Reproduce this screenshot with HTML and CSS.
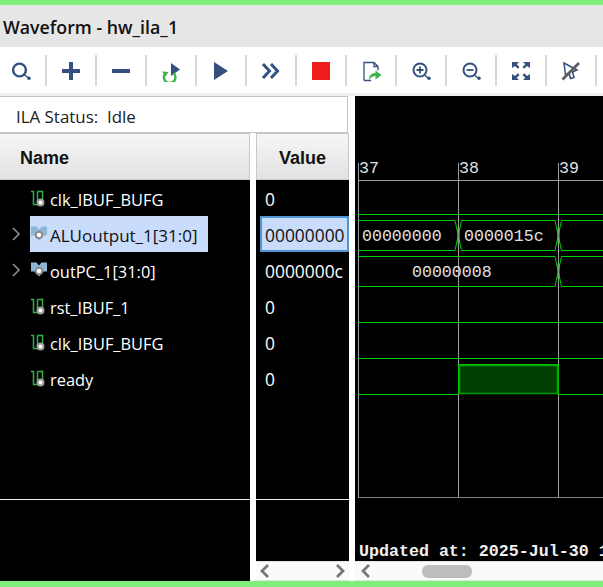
FILE: index.html
```html
<!DOCTYPE html>
<html lang="en">
<head>
<meta charset="utf-8">
<title>Waveform - hw_ila_1</title>
<link rel="stylesheet" href="styles.css">
</head>
<body>
<div class="app">
  <div class="green-bar"></div>
  <header class="title-bar">Waveform - hw_ila_1</header>
  <nav class="toolbar">
    <div class="tool"><svg viewBox="0 0 24 24"><circle cx="10.500" cy="12" r="6.400" fill="none" stroke="#34507f" stroke-width="2.400"/><path d="M15 16.500l4 3" stroke="#34507f" stroke-width="1.500"/><circle cx="20" cy="20.200" r="1.800" fill="#34507f"/></svg></div>
    <div class="tool"><svg viewBox="0 0 24 24"><path d="M3 11h18v4H3zM10 4h4v18h-4z" fill="#34507f"/></svg></div>
    <div class="tool"><svg viewBox="0 0 24 24"><path d="M3 11h18v4H3z" fill="#34507f"/></svg></div>
    <div class="tool"><svg viewBox="0 0 24 24"><path d="M12 5l9 6.500-9 6.500z" fill="#34507f"/><path d="M6.200 15.500a5.800 5.800 0 1 0 8.500-.5" fill="none" stroke="#3fb34a" stroke-width="2.400"/><path d="M3 13.500l6.500.5-3 4.500z" fill="#3fb34a"/></svg></div>
    <div class="tool"><svg viewBox="0 0 24 24"><path d="M5 4l14 9-14 9z" fill="#34507f"/></svg></div>
    <div class="tool"><svg viewBox="0 0 24 24"><path d="M4 6l6.500 7-6.500 7M12 6l6.500 7-6.500 7" fill="none" stroke="#34507f" stroke-width="3"/></svg></div>
    <div class="tool"><svg viewBox="0 0 24 24"><path d="M3 4h18v18H3z" fill="#ee1c1c"/></svg></div>
    <div class="tool"><svg viewBox="0 0 24 24"><path d="M5 22.500V4.500h10l4 4v4M15 4.500v4h4M5 22.500h7" fill="none" stroke="#34507f" stroke-width="1.300"/><path d="M10 22c0-5 3-7 6.500-7v-2.500l6 4.500-6 4.500V18c-2.500 0-4.500 1-6.500 4z" fill="#3fb34a"/></svg></div>
    <div class="tool"><svg viewBox="0 0 24 24"><circle cx="11" cy="12" r="6.500" fill="none" stroke="#34507f" stroke-width="2"/><path d="M7.500 12h7M11 8.500v7" stroke="#34507f" stroke-width="1.800"/><path d="M15.500 17l3.500 3" stroke="#34507f" stroke-width="1.500"/><circle cx="20" cy="20.300" r="1.800" fill="#34507f"/></svg></div>
    <div class="tool"><svg viewBox="0 0 24 24"><circle cx="11" cy="12" r="6.500" fill="none" stroke="#34507f" stroke-width="2"/><path d="M7.500 12h7" stroke="#34507f" stroke-width="1.800"/><path d="M15.500 17l3.500 3" stroke="#34507f" stroke-width="1.500"/><circle cx="20" cy="20.300" r="1.800" fill="#34507f"/></svg></div>
    <div class="tool"><svg viewBox="0 0 24 24"><path d="M3 4h7l-2.300 2.300 2.800 2.800-1.700 1.700-2.800-2.800L3 10zM21 4h-7l2.300 2.300-2.800 2.800 1.700 1.700 2.800-2.800L21 10zM3 22h7l-2.300-2.300 2.800-2.800-1.700-1.700-2.800 2.800L3 16zM21 22h-7l2.300-2.300-2.800-2.800 1.700-1.700 2.800 2.800L21 16z" fill="#34507f"/></svg></div>
    <div class="tool"><svg viewBox="0 0 24 24"><path d="M5 5l13 7-4.500 2 1.500 5.500-3.500 1-1.500-5.500-3.500 2z" fill="none" stroke="#34507f" stroke-width="1.500"/><path d="M3.500 21.500L20 5" stroke="#5f5f5f" stroke-width="2.800"/></svg></div>
    <div class="tool tool-cut"></div>
  </nav>
  <div class="strip"></div>
  <main class="main">
    <section class="left-pane">
      <div class="status">ILA Status:  Idle</div>
      <div class="columns">
        <div class="col col-name">
          <div class="col-head col-head-name">Name</div>
          <div class="rows">
            <div class="row"><span class="twist"></span><span class="cell-name"><svg class="sig" viewBox="0 0 18 18"><path d="M1 2.500h2.500v13H8M7.500 2.500v11M12.500 1.500v11M7.500 2.500h5" fill="none" stroke="#34b044" stroke-width="1.500"/><circle cx="10.500" cy="13.500" r="3" fill="#fff" stroke="#9a9a9a" stroke-width="2"/></svg><span class="lbl">clk_IBUF_BUFG</span></span></div>
            <div class="row"><span class="twist"><svg viewBox="0 0 10 16"><path d="M2 2l6 6-6 6" fill="none" stroke="#8f8f8f" stroke-width="1.600"/></svg></span><span class="cell-name selected"><svg class="sig" viewBox="0 0 18 18"><path d="M1 1.500h5.500l2.500 3 2.500-3H17v9h-4l-4 5-4-5H1z" fill="#8fb6d6"/><circle cx="9" cy="10" r="3.300" fill="#fff" stroke="#8a8a8a" stroke-width="2"/></svg><span class="lbl lbl-wide">ALUoutput_1[31:0]</span></span></div>
            <div class="row"><span class="twist"><svg viewBox="0 0 10 16"><path d="M2 2l6 6-6 6" fill="none" stroke="#8f8f8f" stroke-width="1.600"/></svg></span><span class="cell-name"><svg class="sig" viewBox="0 0 18 18"><path d="M1 1.500h5.500l2.500 3 2.500-3H17v9h-4l-4 5-4-5H1z" fill="#8fb6d6"/><circle cx="9" cy="10" r="3.300" fill="#fff" stroke="#8a8a8a" stroke-width="2"/></svg><span class="lbl">outPC_1[31:0]</span></span></div>
            <div class="row"><span class="twist"></span><span class="cell-name"><svg class="sig" viewBox="0 0 18 18"><path d="M1 2.500h2.500v13H8M7.500 2.500v11M12.500 1.500v11M7.500 2.500h5" fill="none" stroke="#34b044" stroke-width="1.500"/><circle cx="10.500" cy="13.500" r="3" fill="#fff" stroke="#9a9a9a" stroke-width="2"/></svg><span class="lbl">rst_IBUF_1</span></span></div>
            <div class="row"><span class="twist"></span><span class="cell-name"><svg class="sig" viewBox="0 0 18 18"><path d="M1 2.500h2.500v13H8M7.500 2.500v11M12.500 1.500v11M7.500 2.500h5" fill="none" stroke="#34b044" stroke-width="1.500"/><circle cx="10.500" cy="13.500" r="3" fill="#fff" stroke="#9a9a9a" stroke-width="2"/></svg><span class="lbl">clk_IBUF_BUFG</span></span></div>
            <div class="row"><span class="twist"></span><span class="cell-name"><svg class="sig" viewBox="0 0 18 18"><path d="M1 2.500h2.500v13H8M7.500 2.500v11M12.500 1.500v11M7.500 2.500h5" fill="none" stroke="#34b044" stroke-width="1.500"/><circle cx="10.500" cy="13.500" r="3" fill="#fff" stroke="#9a9a9a" stroke-width="2"/></svg><span class="lbl">ready</span></span></div>
          </div>
          <div class="col-foot"></div>
        </div>
        <div class="col col-value">
          <div class="col-head col-head-value">Value</div>
          <div class="rows">
            <div class="row val"><span class="lbl lbl-num">0</span></div>
            <div class="row val val-selected"><span class="lbl lbl-num">00000000</span></div>
            <div class="row val"><span class="lbl lbl-num">0000000c</span></div>
            <div class="row val"><span class="lbl lbl-num">0</span></div>
            <div class="row val"><span class="lbl lbl-num">0</span></div>
            <div class="row val"><span class="lbl lbl-num">0</span></div>
          </div>
          <div class="col-foot"></div>
          <div class="scrollbar">
            <svg class="chev" viewBox="0 0 12 16"><path d="M9 2L3 8l6 6" fill="none" stroke="#777" stroke-width="2.800"/></svg>
            <svg class="chev" viewBox="0 0 12 16"><path d="M3 2l6 6-6 6" fill="none" stroke="#777" stroke-width="2.800"/></svg>
          </div>
        </div>
      </div>
    </section>
    <section class="wave-pane">
      <svg class="wave" viewBox="355 96 248 465">
        <g class="grid">
          <path d="M358.500 163V497.500M458.500 163V497.500M558.500 163V497.500"/>
          <path d="M358 180.500H603"/>
          <path class="dim" d="M358 497.500H603"/>
        </g>
        <g class="sigline">
          <path d="M358 214.500H603"/>
          <path d="M358 220.500H455L461.500 250.500H555L561.500 220.500H603"/>
          <path d="M358 250.500H455L461.500 220.500H555L561.500 250.500H603"/>
          <path d="M358 256.500H555L561.500 286.500H603"/>
          <path d="M358 286.500H555L561.500 256.500H603"/>
          <path d="M358 322.500H603"/>
          <path d="M358 358.500H603"/>
          <path d="M358 394.500H458.500V364.500H558.500V394.500H603"/>
        </g>
        <path class="cross" d="M458.500 228V243M558.500 228V243M558.500 264V279"/>
        <rect class="pulse" x="459.500" y="365.500" width="98" height="28"/>
        <text class="tick" x="359" y="173">37</text>
        <text class="tick" x="459" y="173">38</text>
        <text class="tick" x="559" y="173">39</text>
        <text class="bus" x="362" y="241">00000000</text>
        <text class="bus" x="464" y="241">0000015c</text>
        <text class="bus" x="412" y="277">00000008</text>
        <text class="updated" x="359" y="556">Updated at: 2025-Jul-30 1</text>
      </svg>
      <div class="scrollbar scrollbar-wave">
        <svg class="chev" viewBox="0 0 12 16"><path d="M9 2L3 8l6 6" fill="none" stroke="#777" stroke-width="2.800"/></svg>
        <span class="thumb"></span>
      </div>
    </section>
  </main>
  <div class="green-bar green-bar-bottom"></div>
</div>
</body>
</html>
```

FILE: styles.css
```css
* { box-sizing: border-box; }
html, body { margin: 0; padding: 0; background: #fff; }
body { width: 603px; height: 587px; overflow: hidden; font-family: "Open Sans", "Noto Sans", sans-serif; }
.app { display: flex; flex-direction: column; height: 587px; overflow: hidden; }
.green-bar { height: 5px; background: #80ee7b; flex: none; }
.green-bar-bottom { height: 6px; }
.title-bar { height: 42px; flex: none; background: #e6e6e6; color: #111; font-size: 17.8px; font-weight: 600; line-height: 44px; padding-left: 3px; white-space: nowrap; }
.toolbar { height: 46px; flex: none; display: flex; align-items: center; background: #fff; overflow: hidden; }
.tool { flex: none; width: 50px; height: 31px; border-right: 2px solid #d8d8d8; display: flex; align-items: center; justify-content: center; }
.tool:first-child { width: 47px; padding-right: 3px; }
.tool svg { width: 24px; height: 24px; flex: none; }
.tool-cut { border-right: 0; }
.strip { height: 3px; flex: none; background: #f0f0f0; }
.main { flex: 1; display: flex; min-height: 0; background: #fff; }
.left-pane { width: 355px; flex: none; display: flex; flex-direction: column; }
.status { width: 348px; height: 37px; flex: none; border: 1px solid #c4c4c4; border-left: 0; padding-left: 16px; line-height: 40px; font-size: 16.9px; color: #222; white-space: pre; background: #fff; }
.columns { flex: 1; display: flex; min-height: 0; }
.col { display: flex; flex-direction: column; flex: none; }
.col-name { width: 250px; background: #000; }
.col-value { width: 93px; margin-left: 6px; background: #000; }
.col-head { height: 47px; flex: none; background: linear-gradient(#f6f6f6, #e2e2e2); border: 1px solid #c8c8c8; font-family: "Liberation Sans", Arial, sans-serif; font-weight: 700; font-size: 18px; color: #111; line-height: 48px; }
.col-head-name { border-left: 0; padding-left: 20px; }
.col-head-value { text-align: center; }
.rows { height: 320px; flex: none; border-bottom: 1px solid #eee; display: flex; flex-direction: column; }
.col-foot { flex: 1; background: #000; }
.row { height: 36px; flex: none; display: flex; align-items: center; color: #fff; font-size: 16.4px; white-space: nowrap; }
.lbl { padding-top: 2px; }
.lbl-wide { font-size: 17px; }
.lbl-num { font-size: 17.4px; }
.twist { width: 30px; flex: none; height: 36px; display: flex; align-items: center; padding-left: 11px; }
.twist svg { width: 10px; height: 16px; }
.cell-name { display: flex; align-items: center; width: 178px; height: 36px; }
.sig { width: 18px; height: 18px; flex: none; margin-right: 2px; }
.selected { background: #c9dcfb; color: #111; }
.val { padding-left: 9px; }
.val-selected { margin-left: 4px; padding-left: 3px; border: 2px solid #4f94d4; background: #c9dcfb; color: #111; }
.scrollbar { height: 20px; flex: none; background: #fafafa; border-top: 1px solid #e4e4e4; border-bottom: 1px solid #e4e4e4; display: flex; align-items: center; justify-content: space-between; padding: 0 3px; }
.chev { width: 12px; height: 16px; flex: none; }
.wave-pane { flex: 1; display: flex; flex-direction: column; min-width: 0; background: #000; }
.wave { width: 248px; height: 465px; flex: none; display: block; background: #000; }
.grid path { fill: none; stroke: #a0a0a0; stroke-width: 1; }
.grid .dim { stroke: #808080; }
.sigline path { fill: none; stroke: #00d000; stroke-width: 1; }
.cross { fill: none; stroke: #70a870; stroke-width: 2; }
.pulse { fill: #003f00; stroke: #00a000; stroke-width: 1.500; }
.tick, .bus { font-family: "Liberation Mono", monospace; font-weight: 400; font-size: 16.6px; fill: #e0e0e0; }
.updated { font-family: "Liberation Mono", monospace; font-weight: 700; font-size: 16.65px; fill: #f0f0f0; }
.scrollbar-wave { position: relative; justify-content: flex-start; padding-left: 5px; }
.thumb { position: absolute; left: 67px; top: 3px; width: 50px; height: 13px; border-radius: 6px; background: #bdbdbd; }
```
